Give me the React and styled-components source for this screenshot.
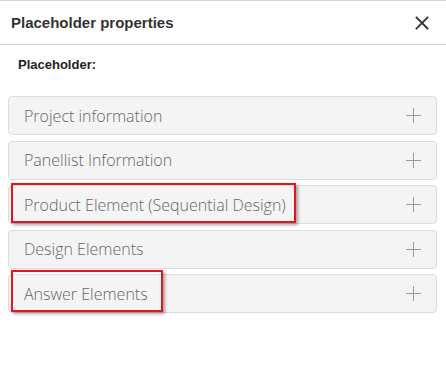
import styled, { createGlobalStyle } from "styled-components";

const GlobalStyle = createGlobalStyle`
    html, body {
        margin: 0;
        padding: 0;
        background: #fff;
    }
    * {
        box-sizing: border-box;
    }
`

const sections = [
    { title: 'Project information' },
    { title: 'Panellist Information' },
    { title: 'Product Element (Sequential Design)', mark: { top: -3, width: 285, height: 40 } },
    { title: 'Design Elements' },
    { title: 'Answer Elements', mark: { top: -5, width: 152, height: 42 } },
];

export default function App() {
    return (
        <>
            <GlobalStyle />
            <Dialog>
                <Header>
                    <Title>Placeholder properties</Title>
                    <Close aria-label="Close">
                        <svg width="14" height="14" viewBox="0 0 14 14">
                            <path d="M1.5 1.5 L12.5 12.5 M12.5 1.5 L1.5 12.5" stroke="#333" strokeWidth="1.8" strokeLinecap="square" />
                        </svg>
                    </Close>
                </Header>
                <Body>
                    <Label>Placeholder:</Label>
                    <Sections>
                        {sections.map(s => (
                            <Section key={s.title}>
                                <SectionTitle>{s.title}</SectionTitle>
                                <Plus>
                                    <svg width="15" height="15" viewBox="0 0 15 15">
                                        <path d="M7.5 0 V15 M0 7.5 H15" stroke="#999" strokeWidth="1" />
                                    </svg>
                                </Plus>
                                {s.mark && (
                                    <Mark $top={s.mark.top} $width={s.mark.width} $height={s.mark.height} />
                                )}
                            </Section>
                        ))}
                    </Sections>
                </Body>
            </Dialog>
        </>
    )
}

const Dialog = styled.div`
    width: 446px;
    height: 385px;
    background: #fff;
    border-top: 1px solid #d4d4d4;
    font-family: "Liberation Sans", Arial, sans-serif;
`

const Header = styled.div`
    height: 44px;
    display: flex;
    align-items: center;
    justify-content: space-between;
    padding: 0 17px 0 11px;
    border-bottom: 1px solid #d0d0d0;
`

const Title = styled.h1`
    margin: 0;
    font-size: 15px;
    font-weight: bold;
    color: #333;
`

const Close = styled.button`
    width: 14px;
    height: 14px;
    padding: 0;
    border: none;
    background: transparent;
    display: flex;
    cursor: pointer;
`

const Body = styled.div`
    padding: 12px 9px 0 8px;
`

const Label = styled.div`
    margin-left: 10px;
    font-size: 13px;
    line-height: 16px;
    font-weight: bold;
    color: #222;
`

const Sections = styled.div`
    margin-top: 23px;
    display: flex;
    flex-direction: column;
    gap: 5.5px;
`

const Section = styled.div`
    position: relative;
    height: 39px;
    display: flex;
    align-items: center;
    justify-content: space-between;
    padding: 0 15px 0 15px;
    background: #f4f4f4;
    border: 1px solid #dcdcdc;
    border-radius: 4px;
    cursor: pointer;
`

const SectionTitle = styled.span`
    font-family: "Open Sans", sans-serif;
    font-size: 16px;
    font-weight: 300;
    color: #666;
`

const Plus = styled.span`
    display: flex;
`

const Mark = styled.span`
    position: absolute;
    left: 2px;
    top: ${props => props.$top}px;
    width: ${props => props.$width}px;
    height: ${props => props.$height}px;
    border: 2px solid #e8141c;
    box-shadow: 2px 2px 3px rgba(0, 0, 0, 0.35);
    pointer-events: none;
`
